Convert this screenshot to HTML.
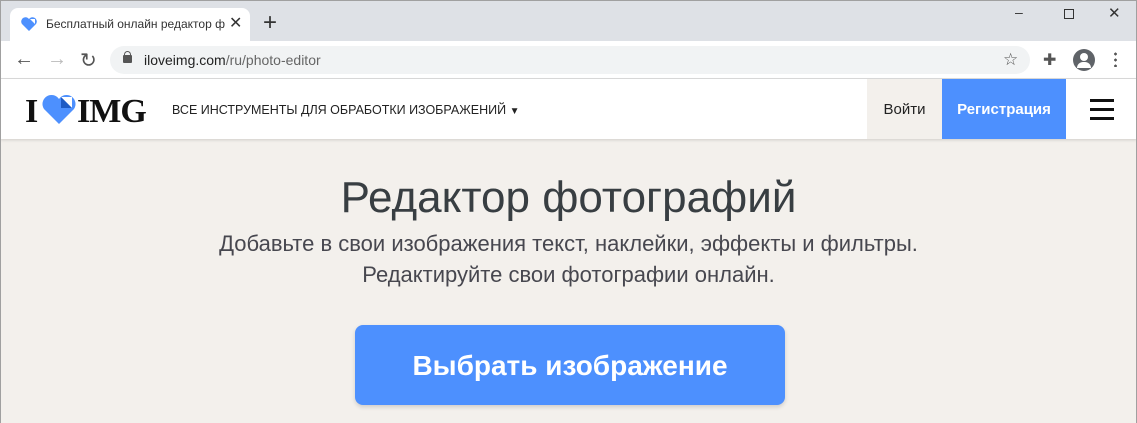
<!DOCTYPE html>
<html><head><meta charset="utf-8"><style>
*{margin:0;padding:0;box-sizing:border-box}
body{width:1137px;height:423px;overflow:hidden;font-family:"Liberation Sans",sans-serif;background:#f3f0ec;position:relative}
.win{position:absolute;inset:0;border:1px solid #a0a0a0;border-bottom:none}
.a{position:absolute}
</style></head><body>
<div class="a" style="left:0;top:0;width:1137px;height:41px;background:#dee1e6"></div>
<div class="a" style="left:10px;top:8px;width:240px;height:34px;background:#fff;border-radius:8px 8px 0 0"></div>
<svg class="a" style="left:21px;top:17px" width="16" height="14" viewBox="0 0 16 14"><path d="M8 14 L1 7 A3.6 3.6 0 0 1 8 2 A3.6 3.6 0 0 1 15 7Z" fill="#4d90fe"/><path d="M9 2 L14 2 L14 7Z" fill="#fff"/></svg>
<div class="a" style="left:46px;top:17px;font-size:12px;color:#333;white-space:nowrap;width:182px;overflow:hidden">Бесплатный онлайн редактор ф</div>
<div class="a" style="left:229px;top:13px;font-size:16px;color:#333">✕</div>
<div class="a" style="left:263px;top:9px;font-size:24px;color:#333;font-weight:300">+</div>
<div class="a" style="left:1015px;top:4px;font-size:14px;color:#333">–</div>
<div class="a" style="left:1064px;top:9px;width:10px;height:10px;border:1px solid #333"></div>
<div class="a" style="left:1108px;top:4px;font-size:15px;color:#333">✕</div>
<div class="a" style="left:0;top:41px;width:1137px;height:38px;background:#fff;border-bottom:1px solid #ddd"></div>
<div class="a" style="left:14px;top:48px;font-size:20px;color:#555">←</div>
<div class="a" style="left:47px;top:48px;font-size:20px;color:#bbb">→</div>
<div class="a" style="left:80px;top:48px;font-size:20px;color:#555">↻</div>
<div class="a" style="left:110px;top:46px;width:920px;height:28px;background:#f1f3f4;border-radius:14px"></div>
<div class="a" style="left:123px;top:55px;width:9px;height:8px;background:#555;border-radius:1px"></div>
<div class="a" style="left:124px;top:51px;width:7px;height:7px;border:1.5px solid #555;border-radius:4px 4px 0 0"></div>
<div class="a" style="left:144px;top:52px;font-size:14px;color:#222">iloveimg.com<span style="color:#666">/ru/photo-editor</span></div>
<div class="a" style="left:1003px;top:50px;font-size:17px;color:#555">☆</div>
<div class="a" style="left:1043px;top:50px;font-size:16px;color:#555">✚</div>
<div class="a" style="left:1073px;top:49px;width:22px;height:22px;border-radius:50%;background:#5f6368"></div>
<div class="a" style="left:1080px;top:53px;width:8px;height:8px;border-radius:50%;background:#fff"></div>
<div class="a" style="left:1077px;top:62px;width:14px;height:6px;border-radius:7px 7px 0 0;background:#fff"></div>
<div class="a" style="left:1114px;top:51px;width:3px;height:16px;background:radial-gradient(circle,#555 1.3px,transparent 1.5px) 0 0/3px 6px"></div>
<div class="a" style="left:0;top:79px;width:1137px;height:60px;background:#fff;box-shadow:0 1px 3px rgba(0,0,0,.15)"></div>
<div class="a" style="left:25px;top:93px;font-family:'Liberation Serif',serif;font-weight:bold;font-size:34px;color:#111;letter-spacing:-1px">I</div>
<svg class="a" style="left:42px;top:94px" width="34" height="30" viewBox="0 0 34 30"><path d="M17 30 L2 15 A7.5 7.5 0 0 1 17 5 A7.5 7.5 0 0 1 32 15Z" fill="#4d90fe"/><path d="M19 3 L30 3 L30 14Z" fill="#fff"/><path d="M19 3 L30 14 L19 14Z" fill="#1e5bc4"/></svg>
<div class="a" style="left:77px;top:93px;font-family:'Liberation Serif',serif;font-weight:bold;font-size:34px;color:#111;letter-spacing:-1px">IMG</div>
<div class="a" style="left:172px;top:103px;font-size:12.5px;color:#222">ВСЕ ИНСТРУМЕНТЫ ДЛЯ ОБРАБОТКИ ИЗОБРАЖЕНИЙ <span style="font-size:10px">▼</span></div>
<div class="a" style="left:867px;top:79px;width:75px;height:60px;background:#f3f0ec;font-size:15px;color:#222;text-align:center;line-height:62px">Войти</div>
<div class="a" style="left:942px;top:79px;width:124px;height:60px;background:#4d90fe;font-size:15px;font-weight:bold;color:#fff;text-align:center;line-height:62px">Регистрация</div>
<div class="a" style="left:1090px;top:99px;width:24px;height:3px;background:#111;box-shadow:0 9px 0 #111,0 18px 0 #111"></div>
<div class="a" style="left:0;top:173px;width:1137px;text-align:center;font-size:44px;color:#383e42">Редактор фотографий</div>
<div class="a" style="left:0;top:228px;width:1137px;text-align:center;font-size:22px;line-height:31px;color:#47474f">Добавьте в свои изображения текст, наклейки, эффекты и фильтры.<br>Редактируйте свои фотографии онлайн.</div>
<div class="a" style="left:355px;top:325px;width:430px;height:80px;background:#4d90fe;border-radius:8px;box-shadow:0 2px 4px rgba(0,0,0,.15);color:#fff;font-size:28px;font-weight:bold;text-align:center;line-height:82px">Выбрать изображение</div>
<div class="win"></div>
</body></html>
